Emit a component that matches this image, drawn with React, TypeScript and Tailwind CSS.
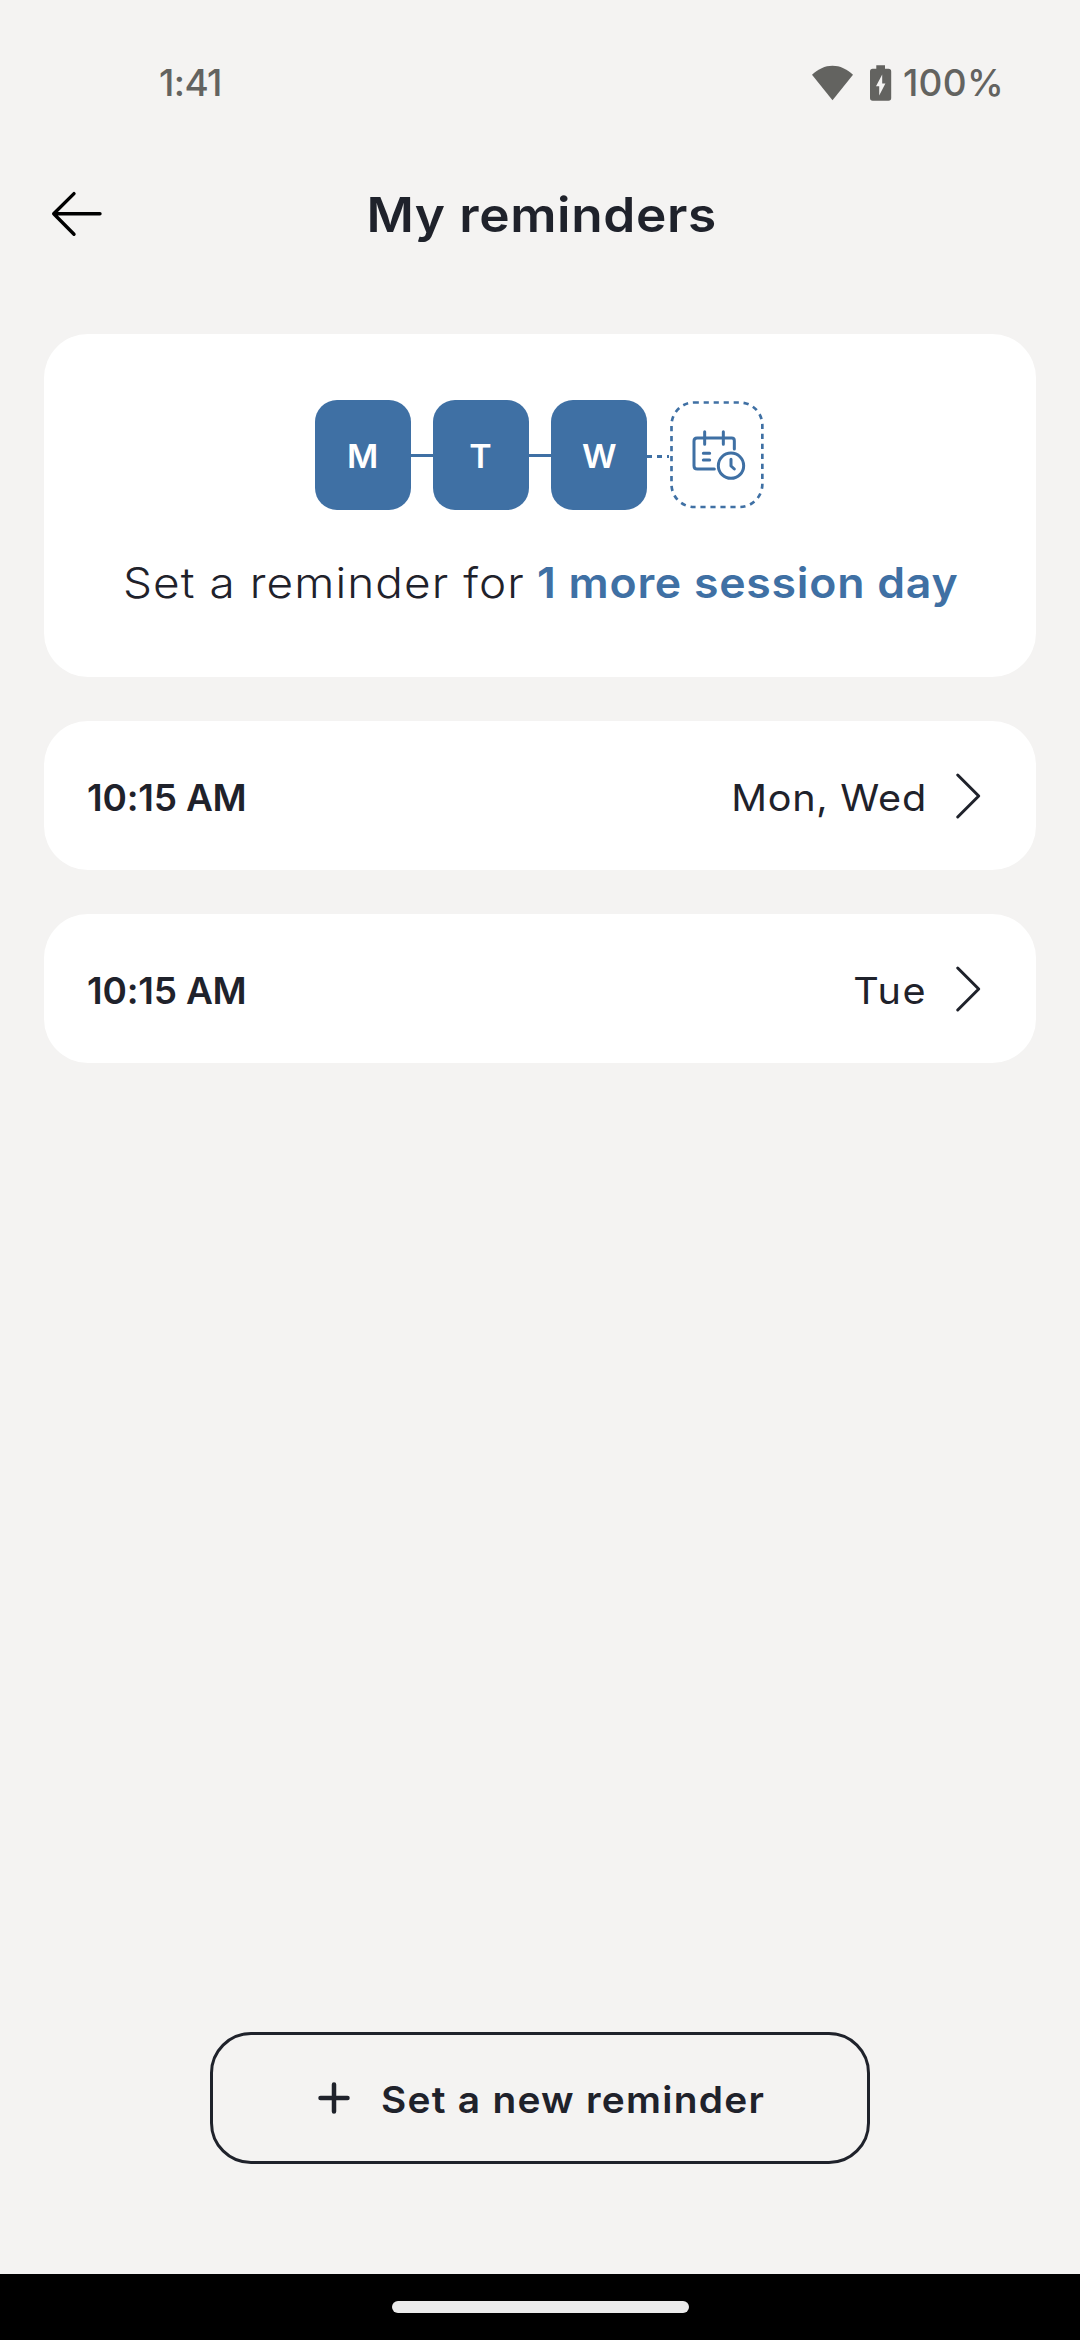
const DAYS = ['M', 'T', 'W'];

const REMINDERS = [
  { time: '10:15 AM', days: 'Mon, Wed', tracking: 'tracking-[0.7px]' },
  { time: '10:15 AM', days: 'Tue', tracking: 'tracking-[1.5px]' },
];

function StatusBar() {
  return (
    <div className="flex h-[165px] items-center justify-between pr-[76px] pl-[159px] text-[37px] leading-none text-[#636360]">
      <span className="font-medium tracking-[-0.6px]">1:41</span>
      <div className="flex items-center">
        <svg className="h-[36px] w-[42px]" viewBox="0 0 42 36" fill="currentColor">
          <path d="M0 9.8C6 4.2 13 0.8 20.5 0.8S35 4.2 41 9.8L20.5 35.3Z" />
        </svg>
        <svg className="ml-[16px] h-[36px] w-[22px]" viewBox="0 0 22 36" fill="currentColor" fillRule="evenodd">
          <path d="M6.3 0.2H15V3.8H18.5Q21.2 3.8 21.2 6.5V33Q21.2 35.7 18.5 35.7H2.7Q0 35.7 0 33V6.5Q0 3.8 2.7 3.8H6.3ZM12.2 9.5L6 21.3H9.2V30.5L15.4 18.5H12.2Z" />
        </svg>
        <span className="ml-[11px] font-medium tracking-[0.3px]">100%</span>
      </div>
    </div>
  );
}

function Header() {
  return (
    <header className="grid h-[99px] grid-cols-[180px_1fr_180px] items-center">
      <svg className="ml-[50px] h-[48px] w-[54px]" viewBox="0 0 54 48" fill="none" stroke="#000" strokeWidth="3.4" strokeLinecap="round" strokeLinejoin="round">
        <path d="M24 2.6L3.7 22.8L24 43.2M3.7 22.8H50" />
      </svg>
      <h1 className="scale-x-[1.07] pl-[3px] text-center text-[48px] leading-none font-semibold tracking-[0.6px] whitespace-nowrap">
        My reminders
      </h1>
    </header>
  );
}

function NextDayTile() {
  return (
    <svg className="h-[110px] w-[96px]" viewBox="207 60 288 330" fill="none" stroke="#3f70a4" strokeLinecap="round" strokeLinejoin="round">
      <path
        d="M281 67.5H419A68 68 0 0 1 487 135.5V313A68 68 0 0 1 419 381H282.5A68 68 0 0 1 214.5 313V135.5A68 68 0 0 1 281 67.5"
        strokeWidth="8"
        strokeDasharray="15.5 14.5"
        strokeLinecap="butt"
      />
      <g strokeWidth="9">
        <path d="M403 207V182Q403 174 395 174H291Q282 174 282 183V257Q282 267 292 267H343" />
        <path d="M314 155V193M370 155V193M310 220H329M310 240H329M393 238V258L403 267" />
        <circle cx="393" cy="257" r="38" />
      </g>
    </svg>
  );
}

function ProgressCard() {
  return (
    <section className="flex h-[343px] flex-col items-center rounded-[44px] bg-white pt-[66px]">
      <div className="flex items-center">
        {DAYS.map((day, i) => (
          <div key={day} className="flex items-center">
            <div className="flex h-[110px] w-[96px] items-center justify-center rounded-[22px] bg-[#3f70a4] pt-[3px] text-[32px] leading-none font-semibold text-white">
              <span className="scale-x-[1.06]">{day}</span>
            </div>
            {i < DAYS.length - 1 ? (
              <div className="h-[3px] w-[22px] bg-[#3f70a4]" />
            ) : (
              <svg className="mt-[2px] h-[3px] w-[22px]" viewBox="0 0 22 3">
                <path d="M0 1.5H22" stroke="#3f70a4" strokeWidth="3" strokeDasharray="5 5" />
              </svg>
            )}
          </div>
        ))}
        <NextDayTile />
      </div>
      <p className="mt-[49px] flex w-[834px] text-[42.5px] leading-[48px] whitespace-nowrap">
        <span className="w-[414px] origin-left scale-x-[1.08] font-light tracking-[1px]">Set a reminder for</span>
        <span className="w-[420px] origin-left scale-x-[1.05] font-semibold tracking-[0.7px] text-[#3f70a4]">1 more session day</span>
      </p>
    </section>
  );
}

export default function App() {
  return (
    <div className="flex h-[2340px] w-[1080px] flex-col overflow-hidden bg-[#f4f3f2] font-['Inter',sans-serif] text-[#1f222b]">
      <StatusBar />
      <Header />
      <main className="mt-[70px] flex flex-col gap-[44px] px-[44px]">
        <ProgressCard />
        {REMINDERS.map(({ time, days, tracking }) => (
          <button key={days} className="flex h-[149px] items-center justify-between rounded-[44px] bg-white pr-[54px] pl-[43px] text-[37px] leading-none">
            <span className="pt-[4px] font-semibold tracking-[-0.2px]">{time}</span>
            <span className="flex items-center">
              <span className={`origin-right scale-x-[1.07] pt-[4px] ${tracking}`}>{days}</span>
              <svg className="ml-[27px] h-[48px] w-[28px]" viewBox="0 0 28 48" fill="none" stroke="currentColor" strokeWidth="3" strokeLinecap="round" strokeLinejoin="round">
                <path d="M3.7 3L24.7 24L3.7 45" />
              </svg>
            </span>
          </button>
        ))}
      </main>
      <footer className="mt-auto flex flex-col items-center">
        <button className="flex h-[132px] w-[660px] items-center rounded-[41px] border-3 border-[#1f222b] pl-[103px] text-[37px] leading-none">
          <svg className="h-[36px] w-[36px]" viewBox="0 0 36 36" fill="none" stroke="currentColor" strokeWidth="4.5" strokeLinecap="round">
            <path d="M18 4.5V31.5M4.5 18H31.5" />
          </svg>
          <span className="ml-[29px] origin-left scale-x-[1.05] pt-[3px] font-semibold tracking-[1.2px] whitespace-nowrap">Set a new reminder</span>
        </button>
        <div className="mt-[110px] flex h-[66px] w-full justify-center bg-black pt-[27px]">
          <div className="h-[12px] w-[297px] rounded-[6px] bg-[#ebebeb]" />
        </div>
      </footer>
    </div>
  );
}
